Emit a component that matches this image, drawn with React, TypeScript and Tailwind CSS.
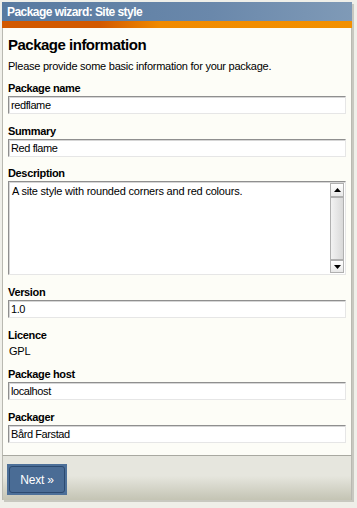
import React from "react";

function Field({ label, value, mt = "mt-[10px]" }: { label: string; value: string; mt?: string }) {
  return (
    <div className={`${mt} flex flex-col`}>
      <div className="h-[14px] text-[11px] leading-[14px] font-bold tracking-[-0.35px] text-black">{label}</div>
      <div className="mt-[1px] flex h-[18px] items-center border border-t-[#8f8f8f] border-l-[#8f8f8f] border-b-[#e6e6e6] border-r-[#e6e6e6] bg-white pl-[2px] text-[11px] tracking-[-0.4px] text-black shadow-[inset_1px_1px_0_#d6d6d6]">
        {value}
      </div>
    </div>
  );
}

export default function App() {
  return (
    <div className="h-[508px] w-[357px] bg-[#efefe9] pl-[2px] pt-[2px] font-['Liberation_Sans',Arial,sans-serif]">
      <div className="flex w-[350px] flex-col shadow-[2px_2px_0_#c8c8c0]">
        <div className="flex h-[19px] items-center bg-[linear-gradient(to_right,#587aa0,#6a88ab_60%,#7f9ab7)] pl-[5px] text-[12px] font-bold tracking-[-0.55px] text-white">
          Package wizard: Site style
        </div>
        <div className="h-[7px] bg-[linear-gradient(to_right,#d25900_28%,#f08a00_45%,#f29000)]" />
        <div className="flex flex-col border-x border-[#b9b9b1] bg-[#fdfdf7] pl-[5px] pr-[5px] pb-[12px] pt-[8px]">
          <div className="h-[18px] text-[15px] leading-[18px] font-bold tracking-[-0.5px] text-black">Package information</div>
          <div className="mt-[5px] h-[14px] text-[11px] leading-[14px] tracking-[-0.25px] text-black">
            Please provide some basic information for your package.
          </div>
          <Field label="Package name" value="redflame" mt="mt-[8px]" />
          <Field label="Summary" value="Red flame" />
          <div className="mt-[9px] flex flex-col">
            <div className="h-[14px] text-[11px] leading-[14px] font-bold tracking-[-0.35px] text-black">Description</div>
            <div className="mt-[1px] flex h-[94px] border border-t-[#8f8f8f] border-l-[#8f8f8f] border-b-[#e6e6e6] border-r-[#e6e6e6] bg-white shadow-[inset_1px_1px_0_#d6d6d6]">
              <div className="flex-1 pl-[3px] pt-[2px] text-[11px] leading-[14px] tracking-[-0.2px] text-black">
                A site style with rounded corners and red colours.
              </div>
              <div className="mr-[1px] mt-[1px] mb-[1px] flex w-[14px] flex-col">
                <div className="flex h-[14px] items-center justify-center border border-[#b0b0b0] bg-[linear-gradient(to_bottom,#ffffff,#e8e8e8)]">
                  <svg width="7" height="4" viewBox="0 0 7 4"><path d="M3.5 0 L7 4 L0 4 Z" fill="#000" /></svg>
                </div>
                <div className="flex-1 border border-[#b0b0b0] bg-[linear-gradient(to_right,#f2f2f2,#d9d9d9)]" />
                <div className="flex h-[13px] items-center justify-center border border-[#b0b0b0] bg-[linear-gradient(to_bottom,#ffffff,#e8e8e8)]">
                  <svg width="7" height="4" viewBox="0 0 7 4"><path d="M0 0 L7 0 L3.5 4 Z" fill="#000" /></svg>
                </div>
              </div>
            </div>
          </div>
          <Field label="Version" value="1.0" />
          <div className="mt-[10px] flex flex-col">
            <div className="h-[14px] text-[11px] leading-[14px] font-bold tracking-[-0.35px] text-black">Licence</div>
            <div className="mt-[2px] h-[14px] pl-[1px] text-[11px] leading-[14px] tracking-[-0.2px] text-black">GPL</div>
          </div>
          <Field label="Package host" value="localhost" mt="mt-[9px]" />
          <Field label="Packager" value="Bård Farstad" />
        </div>
        <div className="flex h-[45px] items-start border-x border-t border-[#b9b9b1] border-t-[#a9a9a1] bg-[linear-gradient(to_bottom,#e6e6de_45%,#c4c4b4)] pl-[4px] pt-[8px]">
          <div className="flex h-[31px] w-[60px] items-center justify-center bg-[#4d7099] p-[2px]">
            <div className="flex h-full w-full items-center justify-center rounded-[3px] border border-[#2c4a70] bg-[#4a6c95] text-[12px] tracking-[-0.2px] text-white">
              Next »
            </div>
          </div>
        </div>
      </div>
    </div>
  );
}
